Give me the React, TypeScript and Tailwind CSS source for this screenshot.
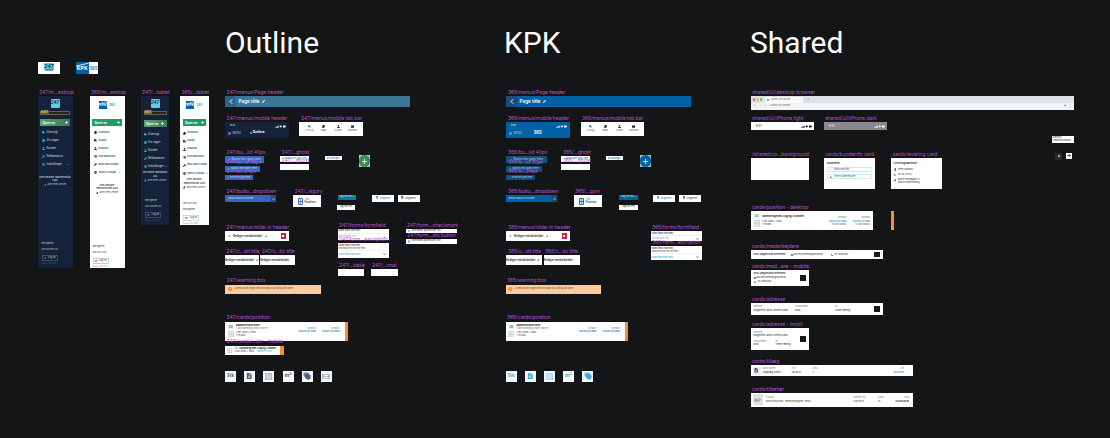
import React from 'react';
import { FaTruck, FaCopy, FaUser, FaShoppingCart, FaWrench, FaCog, FaFileAlt, FaEnvelope, FaPhoneAlt, FaHome, FaTimesCircle, FaExclamationCircle, FaPen, FaBars, FaTh } from 'react-icons/fa';

type BoxProps = { at: string; children?: React.ReactNode };

/* A frame placed on the free canvas. */
function Frame({ at, children }: BoxProps) {
  return <div className={`absolute overflow-hidden ${at}`}>{children}</div>;
}

function Label({ at, children }: BoxProps) {
  return (
    <div className={`absolute z-10 h-[6px] whitespace-nowrap text-[5px] leading-[6px] tracking-[-0.06px] text-[#b452d4] ${at}`}>{children}</div>
  );
}

function Status({ c }: { c: string }) {
  return (
    <div className={`flex items-center justify-between ${c}`}>
      <span>9:41</span>
      <svg className="h-[3px] w-[11px]" viewBox="0 0 11 3" fill="currentColor">
        <path d="M0 2h.7v.8H0zM1 1.5h.7v1.3H1zM2 1h.7v1.8H2zM3 .4h.6v2.4H3zM4.4 1.1q1.4-1.2 2.8 0L5.8 2.7zM8 .5h2.6v2H8z" />
      </svg>
    </div>
  );
}

function Logo247({ s }: { s: string }) {
  return (
    <div className={`flex flex-col items-center justify-center rounded-[1px] bg-[#62cde0] font-bold italic leading-none text-[#123a52] ${s}`}>247</div>
  );
}

function LogoKpk({ s }: { s: string }) {
  return (
    <div className={`relative flex items-end justify-center overflow-hidden bg-[#0062a8] font-bold leading-none text-white ${s}`}>
      <svg className="absolute inset-0 h-full w-full" viewBox="0 0 10 10" preserveAspectRatio="none">
        <path d="M0 3.4 10 1" stroke="#fff" strokeWidth=".7" />
      </svg>
      <span>KPK</span>
    </div>
  );
}

const icons = [FaTruck, FaCopy, FaUser, FaWrench, FaCog];
const icons365 = [FaCopy, FaTruck, FaUser, FaShoppingCart, FaWrench, FaCog];
const items247 = ['Oversigt', 'Vis sager', 'Kunder', 'Reklamation', 'Indstillinger'];
const items365 = ['OVERSIGT', 'SAGER', 'KUNDER', 'KPK WEBSHOP', 'REKLAMATIONER', 'INDSTILLINGER'];

function Sidebar({ at, kpk, tablet }: { at: string; kpk?: boolean; tablet?: boolean }) {
  const items = kpk ? items365 : items247;
  const set = kpk ? icons365 : icons;
  return (
    <Frame at={`${at} ${kpk ? 'bg-white text-[#333]' : 'bg-[#14233a] text-[#c6ced8]'}`}>
      <div className="flex h-full flex-col">
        <div className="flex h-[15px] shrink-0 items-center justify-center pt-[1px]">
          {kpk ? (
            <div className="flex items-center gap-[2px] pt-[2px]">
              <LogoKpk s="h-[8px] w-[8px] pb-[1px] text-[3.6px]" />
              <span className="text-[3px] font-bold text-[#4f9ccc]">365</span>
            </div>
          ) : (
            <Logo247 s="mb-[2px] h-[9px] w-[9px] text-[4.5px]" />
          )}
        </div>
        <div className="mx-[2.5px] h-[4px] shrink-0">
          {!kpk && (
            <div className="flex h-full items-center gap-[1px] bg-[#6b5f42] px-[1px] text-[3.4px] font-bold leading-none text-[#e6c877]">
              <span>KEY</span>
              <span className="h-[2px] flex-1 bg-[#26251f]" />
            </div>
          )}
        </div>
        <div className={`mx-[2.5px] flex h-[7px] shrink-0 items-center justify-between px-[2.5px] text-[3px] font-bold leading-[4px] text-white ${tablet && !kpk ? 'mt-[5px]' : 'mt-[4px]'} ${kpk ? 'bg-[#219a63]' : 'bg-gradient-to-r from-[#5aa373] to-[#3b7b55]'}`}>
          <span>Opret ny</span>
          <svg className="h-[3px] w-[3px]" viewBox="0 0 3 3" stroke="#fff" strokeWidth=".7"><path d="M1.5 0v3M0 1.5h3" /></svg>
        </div>
        <div className={tablet ? 'mt-[3px]' : 'mt-[2.3px]'}>
          {items.map((t, i) => {
            const Icon = set[i];
            return (
              <div key={t} className={`flex h-[8.05px] items-center gap-[1.5px] whitespace-nowrap ${tablet ? 'pl-[2.5px]' : 'pl-[4.5px]'}`}>
                <Icon className={`h-[3px] w-[3px] shrink-0 ${kpk ? 'text-[#222]' : 'text-[#31b3cc]'}`} />
                <span className={kpk ? 'text-[2.3px] font-bold text-[#315b7c]' : 'text-[2.8px] font-medium'}>{t}</span>
                {i === items.length - 1 && <span className="ml-auto pr-[4px] text-[3px]">⌄</span>}
              </div>
            );
          })}
        </div>
        <div className={`text-center font-semibold leading-[3.5px] ${tablet ? 'mt-[1px]' : 'mt-[7px]'} ${tablet && !kpk ? 'text-[2.1px]' : 'text-[2.7px]'}`}>
          <div className="whitespace-nowrap">{kpk ? 'Den bedste' : 'Den bedste Tømrerbutik'}</div>
          <div className="whitespace-nowrap">{kpk ? 'Tømrerbutik ApS' : 'ApS'}</div>
          <div className="mt-[0.5px] flex items-center justify-center gap-[1px] whitespace-nowrap text-[2.2px] font-normal">
            <FaUser className={`h-[2.5px] w-[2.5px] ${kpk ? 'text-[#222]' : 'text-[#31b3cc]'}`} />
            Jane Peter Jensen
          </div>
        </div>
        <div className={`mt-auto flex flex-col gap-[1.5px] text-[2.3px] leading-[3.8px] ${kpk ? 'pb-[1px] pl-[3px]' : 'pb-[4px] pl-[4px]'}`}>
          <span>{kpk && tablet ? 'Om KPK 365' : 'Betingelser'}</span>
          <span className="whitespace-nowrap">{kpk ? (tablet ? 'Betingelser' : 'Om KPK 365') : 'Om Outline 247'}</span>
          <div className={`mt-[2px] flex h-[5.5px] w-[16px] items-center justify-center gap-[2px] border ${kpk ? (tablet ? 'border-[#c4ddf0]' : 'border-[#ccc]') : 'border-[#3f4c60]'}`}>
            <FaTimesCircle className="h-[2.5px] w-[2.5px] text-[#e33c4e]" />
            <span>Log ud</span>
          </div>
          <span className={`text-[1.8px] leading-[2px] ${kpk ? 'text-[#777]' : 'text-[#2d6e80]'}`}>Version 1.0.1 (123)</span>
        </div>
      </div>
    </Frame>
  );
}

function PageHeader({ at, back }: { at: string; back: string }) {
  return (
    <Frame at={at}>
      <div className="flex h-full items-center text-white">
        <div className={`flex h-full w-[11px] items-center justify-center ${back}`}>
          <svg className="h-[5px] w-[4px]" viewBox="0 0 4 5" fill="none" stroke="#fff" strokeWidth="1"><path d="M3.2.3 1 2.5l2.2 2.2" /></svg>
        </div>
        <span className="pl-[2.5px] text-[4.7px] font-semibold">Page title</span>
        <FaPen className="ml-[2.5px] h-[3px] w-[3px]" />
      </div>
    </Frame>
  );
}

function MobileHeader({ at, kpk }: { at: string; kpk?: boolean }) {
  return (
    <Frame at={at}>
      <Status c="h-[8px] pl-[5px] pr-[3px] text-[2.6px] text-white" />
      <div className="flex h-[6px] items-center pl-[3px] text-[2.8px] text-[#b9c7d6]">
        <FaBars className="mr-[1.5px] h-[3px] w-[3px]" />
        <span className="w-[17px]">MENU</span>
        {kpk ? (
          <span className="pl-[3px] text-[4.2px] font-bold text-white">365</span>
        ) : (
          <>
            <span className="mr-[0.5px] h-[2.5px] w-[2.5px] rounded-full bg-[#41bdcf]" />
            <span className="text-[3.4px] font-bold text-white">Outline</span>
          </>
        )}
      </div>
    </Frame>
  );
}

function TabBar({ at }: { at: string }) {
  const tabs = [[FaTruck, 'Oversigt'], [FaCopy, 'Sager'], [FaUser, 'Kunder'], [FaEnvelope, 'Beskeder']] as const;
  return (
    <Frame at={`bg-white ${at}`}>
      <div className="flex h-full items-center justify-around px-[3px]">
        {tabs.map(([Icon, t], i) => (
          <div key={t} className={`flex w-[14px] flex-col items-center gap-[1.2px] text-[2.1px] leading-[2.5px] ${i ? 'text-[#555]' : 'text-[#4a80d0]'}`}>
            <Icon className={`h-[3px] w-[3px] ${i ? 'text-[#222]' : ''}`} />
            <span>{t}</span>
          </div>
        ))}
      </div>
    </Frame>
  );
}

function Button({ at, children }: BoxProps) {
  return (
    <Frame at={at}>
      <div className="flex h-full items-center justify-center gap-[1.5px] whitespace-nowrap">
        <span>+</span>
        <span>{children}</span>
      </div>
    </Frame>
  );
}

function RoundAdd({ at, c }: { at: string; c: string }) {
  return (
    <Frame at={at}>
      <div className={`flex h-full w-full items-center justify-center rounded-full ${c}`}>
        <svg className="h-[5px] w-[5px]" viewBox="0 0 5 5" stroke="#fff" strokeWidth=".8"><path d="M2.5 0v5M0 2.5h5" /></svg>
      </div>
    </Frame>
  );
}

function Dropdown({ at, side }: { at: string; side: string }) {
  return (
    <Frame at={at}>
      <div className="flex h-full items-center justify-between text-[2.7px] text-[#cfe0f5]">
        <span className="pl-[2.5px]">Send tilbud til kunde</span>
        <span className={`flex h-full w-[6px] items-center justify-center ${side}`}>
          <svg className="h-[2px] w-[3px]" viewBox="0 0 3 2" fill="none" stroke="#fff" strokeWidth=".7"><path d="M.3 1.6 1.5.4l1.2 1.2" /></svg>
        </span>
      </div>
    </Frame>
  );
}

function Category({ at, c }: { at: string; c: string }) {
  return (
    <Frame at={`bg-white ${at}`}>
      <div className="flex h-full items-center gap-[2px] pl-[5px]">
        <svg className={`h-[7px] w-[5px] ${c}`} viewBox="0 0 5 7" fill="none" stroke="currentColor"><path d="M.5.5h4v6h-4zM.5 3.5h4M1.5 2h2M1.5 5h2" /></svg>
        <div className="text-[2px] leading-[3.5px] text-[#777]">
          <div>Tilføj</div>
          <div className="text-[2.8px] font-semibold text-[#333]">Position</div>
        </div>
      </div>
    </Frame>
  );
}

function Segment({ at, c }: { at: string; c: string }) {
  return (
    <Frame at={`bg-white ${at}`}>
      <div className={`flex items-center justify-center gap-[1.5px] pt-[0.5px] text-[2.6px] leading-[4px] ${c}`}>
        <FaFileAlt className="h-[2.5px] w-[2.5px]" />
        <span>Segment</span>
      </div>
    </Frame>
  );
}

function Chip({ at, children }: BoxProps) {
  return (
    <Frame at={at}>
      <div className="flex h-full items-center justify-center whitespace-nowrap text-[2.2px] leading-[4px]">{children}</div>
    </Frame>
  );
}

function SlideIn({ at }: { at: string }) {
  return (
    <Frame at={`bg-white ${at}`}>
      <div className="flex h-full items-center pl-[3px] pr-[3px] text-[#222]">
        <span className="w-[5px] text-[4px]">×</span>
        <span className="whitespace-nowrap text-[2.9px] font-semibold">Rediger medarbejder</span>
        <FaPen className="ml-[2.5px] h-[2.5px] w-[2.5px] text-[#1686c4]" />
        <div className="ml-auto flex h-[5.5px] w-[5.5px] items-center justify-center bg-[#cf1f43]">
          <span className="h-[2px] w-[2px] bg-white" />
        </div>
      </div>
    </Frame>
  );
}

function EditTitle({ at, pen }: { at: string; pen?: boolean }) {
  return (
    <Frame at={`bg-white ${at}`}>
      <div className="flex h-full items-center whitespace-nowrap text-[2.9px] font-semibold text-[#222]">
        Rediger medarbejder
        {pen && <FaPen className="ml-[2px] h-[2.5px] w-[2.5px] shrink-0 text-[#1686c4]" />}
      </div>
    </Frame>
  );
}

function FormField({ at, desc, c }: { at: string; desc?: boolean; c?: string }) {
  return (
    <Frame at={`bg-white ${at}`}>
      <div className="flex h-full flex-col px-[1px] pt-[0.5px] text-[2.3px] leading-[3px] text-[#333]">
        <span className="font-semibold">Form field Title text</span>
        {desc && <span className="text-[2px]">Description text for the field</span>}
        <div className={`mt-[0.5px] flex flex-1 items-center justify-between border-t border-[#f0f0f0] pr-[2px] ${c ?? 'text-[#999]'}`}>
          <span>{desc ? 'Form field input text' : 'Placeholder text'}</span>
          <svg className="h-[2px] w-[3px]" viewBox="0 0 3 2" fill="none" stroke="#222" strokeWidth=".6"><path d="M.3.4 1.5 1.6 2.7.4" /></svg>
        </div>
      </div>
    </Frame>
  );
}

function Check({ at }: { at: string }) {
  return (
    <Frame at={`bg-white ${at}`}>
      <div className="flex h-full items-center gap-[1.5px] pl-[1.5px] text-[2.2px] text-[#222]">
        <span className="h-[2.5px] w-[2.5px] bg-[#8fcde6]" />
        <span className="whitespace-nowrap leading-[4px]">Checkmark placeholder text</span>
      </div>
    </Frame>
  );
}

function Warning({ at }: { at: string }) {
  return (
    <Frame at={`bg-[#fdcb9c] ${at}`}>
      <div className="flex h-full items-center gap-[2.5px] pl-[2.5px] text-[2.3px] text-[#5d4a38]">
        <FaExclamationCircle className="h-[4.5px] w-[4.5px] text-[#f7922d]" />
        <span>Lorem ipsum noget med hvordan skal stå og så videre</span>
      </div>
    </Frame>
  );
}

function Price({ c, foot }: { c: string; foot?: boolean }) {
  return (
    <div className="flex flex-col items-end whitespace-nowrap text-[2.2px] leading-[3.6px] text-[#666]">
      <span>Stykpris</span>
      <span className={`text-[2.4px] font-bold ${c}`}>160.817,91 DKK</span>
      {foot && <span className="text-[2px] text-[#333]">112.482,50 DKK</span>}
    </div>
  );
}

function Position({ at, c, title, shared }: { at: string; c: string; title: string; shared?: boolean }) {
  return (
    <Frame at={`bg-white ${at}`}>
      <div className="flex h-full text-[#222]">
        <div className="flex w-[11px] flex-col items-center gap-[1.5px] pt-[3.5px]">
          <span className={`flex h-[4px] w-[4.5px] items-center justify-center bg-[#e0f1f8] text-[2.8px] font-bold leading-none ${c}`}>20</span>
          <svg className="h-[6.5px] w-[6px]" viewBox="0 0 6 7" fill="#f4f4f4" stroke="#999" strokeWidth=".4"><path d="M.3.3h5.4v6.4H.3zM3 .3v6.4M.3 3.5h5.4" /></svg>
        </div>
        <div className={`flex-1 whitespace-nowrap text-[2.2px] leading-[3.4px] ${shared ? 'pt-[3.5px]' : 'pt-[2.5px]'}`}>
          <div className="text-[2.5px] font-bold">{title}</div>
          {!shared && <div className="text-[1.9px] text-[#666]">1-fløjet dannebrog vindue, topstyret</div>}
          <div className={shared ? 'mt-[2px]' : ''}>2 stk (1050 x 1300)</div>
          <div>1.115,000</div>
        </div>
        <div className={`flex gap-[6px] pt-[5px] ${shared ? 'pr-[3px]' : 'pr-[5px]'}`}>
          <Price c={c} foot={shared} />
          <Price c={c} foot={shared} />
        </div>
        {!shared && <div className="w-[3px] shrink-0 bg-[#f7902b]" />}
      </div>
    </Frame>
  );
}

const tools = [
  <span className="text-[4.3px] font-bold">Stk</span>,
  <FaFileAlt className="h-[6.5px] w-[6.5px]" />,
  <svg className="h-[7px] w-[7px]" viewBox="0 0 7 7" stroke="currentColor" strokeWidth=".5"><path d="M.4.4h6.2v6.2H.4z" fill="currentColor" fillOpacity=".25" strokeDasharray=".8 .4" /></svg>,
  <span className="text-[5.2px] font-bold">m²</span>,
  <svg className="h-[8px] w-[8px]" viewBox="0 0 8 8" fill="currentColor"><path d="m.5.5 4-.1L6 2v3L2.5 5.5.5 4z" opacity=".8" /><path d="m2 2 3.5-.4 2 1.8v3L5.5 8 2 6z" /></svg>,
  <svg className="h-[7px] w-[8px]" viewBox="0 0 8 7" fill="none" stroke="currentColor" strokeWidth=".6"><path d="M.5.4v6.2M7.5.4v6.2M.5 3.5h7M1.5 1.5h5v4h-5z" opacity=".6" /></svg>,
];

function Tools({ at, c, count }: { at: string; c: string; count: number }) {
  return (
    <div className={`absolute flex gap-[8.2px] ${at}`}>
      {tools.slice(0, count).map((t, i) => (
        <div key={i} className={`flex h-[11px] w-[11px] shrink-0 items-center justify-center bg-[#f5f8fa] leading-none ${c}`}>{t}</div>
      ))}
    </div>
  );
}

function Pair({ w, top, bottom, c }: { w: string; top: string; bottom: string; c?: string }) {
  return (
    <div className={`whitespace-nowrap text-[2.2px] leading-[3.6px] text-[#777] ${w}`}>
      <div>{top}</div>
      <div className={c ?? 'text-[#222]'}>{bottom}</div>
    </div>
  );
}

const Square = () => <div className="mr-[3px] ml-auto h-[5.5px] w-[5.5px] shrink-0 bg-[#17191c]" />;

function OutlineSection() {
  return (
    <>
      <Label at="left-[226.5px] top-[88.7px]">247/menus/Page header</Label>
      <PageHeader at="left-[225px] top-[96px] h-[11px] w-[185px] bg-[#3b7697]" back="bg-[#2e6486]" />
      <Label at="left-[226.5px] top-[115px]">247/menus/mobile header</Label>
      <MobileHeader at="left-[225px] top-[122px] h-[15.5px] w-[64px] bg-[#14233a]" />
      <Label at="left-[301px] top-[115px]">247/menus/mobile tab bar</Label>
      <TabBar at="left-[299px] top-[122px] h-[13.5px] w-[64px]" />
      <Label at="left-[226.5px] top-[148.5px]">247/bu...lid 40px</Label>
      <Button at="left-[225px] top-[155.5px] h-[7.5px] w-[39px] bg-[#3568bd] text-[2.9px] text-[#c9daf5]">Button text goes here</Button>
      <Label at="left-[226.5px] top-[158.5px]">247/b...id 32px</Label>
      <Button at="left-[225px] top-[166px] h-[6px] w-[35px] bg-[#3568bd] text-[2.6px] text-[#c9daf5]">Button text goes here</Button>
      <Label at="left-[226.5px] top-[168px]">247/b...24px</Label>
      <Button at="left-[225px] top-[175px] h-[4.5px] w-[27.5px] bg-[#3568bd] text-[2px] text-[#c9daf5]">Button text goes here</Button>
      <Label at="left-[281.5px] top-[148.5px]">247/...ghost</Label>
      <Button at="left-[280px] top-[156px] h-[6px] w-[29px] bg-white text-[2.2px] text-[#3568bd]">Button text goes here</Button>
      <Label at="left-[281.5px] top-[156.7px]">247/...ghost</Label>
      <Frame at="left-[280px] top-[164px] h-[6px] w-[29px] bg-white" />
      <Frame at="left-[325px] top-[155.5px] h-[4.5px] w-[16.5px] bg-white text-[#3568bd]">
        <div className="flex h-full items-center justify-center gap-[1px] text-[2.7px]"><FaPen className="h-[2px] w-[2px]" />Rediger</div>
      </Frame>
      <RoundAdd at="left-[358.5px] top-[155px] h-[12px] w-[11.5px] bg-[#b9cabf]" c="bg-[#3c8a57]" />
      <Label at="left-[226.5px] top-[187.7px]">247/butto...dropdown</Label>
      <Dropdown at="left-[225px] top-[195px] h-[7px] w-[51px] bg-[#3568bd]" side="bg-[#284d8d]" />
      <Label at="left-[294.5px] top-[187.7px]">247/...egory</Label>
      <Category at="left-[292.5px] top-[195px] h-[12px] w-[28.5px]" c="text-[#4775c4]" />
      <Chip at="left-[338px] top-[195px] h-[4.5px] w-[18px] bg-[#0e7893] text-[#d6f3f9]">Tag title text ×</Chip>
      <Chip at="left-[337px] top-[205px] h-[4.5px] w-[18px] bg-white text-[#222]">Tag title text</Chip>
      <Segment at="left-[372px] top-[195px] h-[7px] w-[22px]" c="text-[#3568bd]" />
      <Segment at="left-[397.5px] top-[195px] h-[7px] w-[22px]" c="text-[#333]" />
      <Label at="left-[226.5px] top-[224px]">247/menus/slide-in header</Label>
      <SlideIn at="left-[225px] top-[231px] h-[10px] w-[64px]" />
      <Label at="left-[226.5px] top-[248px]">247/c...dit title</Label>
      <EditTitle at="left-[225px] top-[255px] h-[10px] w-[34px]" pen />
      <Label at="left-[262px] top-[248px]">247/c...tic title</Label>
      <EditTitle at="left-[260px] top-[255px] h-[10px] w-[35px]" />
      <Label at="left-[339px] top-[221.7px]">247/forms/formfield</Label>
      <FormField at="left-[337.5px] top-[228.5px] h-[11px] w-[51px]" />
      <Label at="left-[339px] top-[236px]">247/form...escription</Label>
      <FormField at="left-[337.5px] top-[243px] h-[14.5px] w-[51px]" desc c="text-[#1a91b0]" />
      <Label at="left-[407px] top-[221.7px]">247/form...checkmark</Label>
      <Check at="left-[406px] top-[228.5px] h-[4.5px] w-[51px]" />
      <Label at="left-[407px] top-[232.3px]">247/form...dio button</Label>
      <Check at="left-[406px] top-[239px] h-[4.5px] w-[51px]" />
      <Label at="left-[339px] top-[261.7px]">247/...table</Label>
      <Frame at="left-[337.5px] top-[269px] h-[7px] w-[26.5px] bg-white" />
      <Label at="left-[372px] top-[261.7px]">247/...rmal</Label>
      <Frame at="left-[371px] top-[269px] h-[7px] w-[26.5px] bg-white" />
      <Label at="left-[226.5px] top-[277px]">247/warning box</Label>
      <Warning at="left-[225px] top-[284.5px] h-[9px] w-[96px]" />
      <Label at="left-[226.5px] top-[314px]">247/cards/position</Label>
      <Position at="left-[225px] top-[321.5px] h-[19px] w-[122.5px]" c="text-[#1590b5]" title="Køkkenvindue nord" />
      <Label at="left-[226.5px] top-[338px]">247/cards/...ion - mobile</Label>
      <Frame at="left-[225px] top-[345.5px] h-[9.5px] w-[58.5px] bg-white">
        <div className="flex h-full items-center text-[2.2px] leading-[3.4px] text-[#222]">
          <FaTh className="mx-[2px] h-[5.5px] w-[5.5px] text-[#ccc]" />
          <div className="flex-1 whitespace-nowrap">
            <div className="font-bold"><span className="mr-[2px] text-[#1590b5]">20</span>Dannebrog med 3 lag og 3 rammer</div>
            <div>2 stk (1050 x 1300) <span className="ml-[2px] text-[#1590b5]">160.817,91 DKK</span></div>
          </div>
          <div className="h-full w-[3.5px] bg-[#f7902b]" />
        </div>
      </Frame>
      <Tools at="left-[225px] top-[370.5px]" c="text-[#526077]" count={6} />
    </>
  );
}

function KpkSection() {
  return (
    <>
      <Label at="left-[508px] top-[88.7px]">365/menus/Page header</Label>
      <PageHeader at="left-[506px] top-[96px] h-[11px] w-[185px] bg-[#0061a4]" back="bg-[#164d7b]" />
      <Label at="left-[508px] top-[115px]">365/menus/mobile header</Label>
      <MobileHeader at="left-[506px] top-[122px] h-[15.5px] w-[63.5px] bg-[#0061a4]" kpk />
      <Label at="left-[582px] top-[115px]">365/menus/mobile tab bar</Label>
      <TabBar at="left-[580.5px] top-[122px] h-[13.5px] w-[63.5px]" />
      <Label at="left-[508px] top-[148.5px]">365/bu...lid 40px</Label>
      <Button at="left-[506px] top-[155.5px] h-[7.5px] w-[41px] bg-[#134f7c] text-[2.9px] text-[#bcd9ee]">Button text goes here</Button>
      <Label at="left-[508px] top-[158.5px]">365/b...id 32px</Label>
      <Button at="left-[506px] top-[166px] h-[6px] w-[36px] bg-[#134f7c] text-[2.6px] text-[#bcd9ee]">Button text goes here</Button>
      <Label at="left-[508px] top-[168px]">365/b...24px</Label>
      <Button at="left-[506px] top-[175px] h-[4.5px] w-[29px] bg-[#134f7c] text-[2px] text-[#bcd9ee]">Button text goes here</Button>
      <Label at="left-[563px] top-[148.5px]">365/...ghost</Label>
      <Button at="left-[561px] top-[156px] h-[6px] w-[29px] bg-white text-[2.2px] text-[#0061a4]">Button text goes here</Button>
      <Label at="left-[563px] top-[156.7px]">365/...ghost</Label>
      <Frame at="left-[561px] top-[164px] h-[6px] w-[29px] bg-white" />
      <Frame at="left-[605.5px] top-[155.5px] h-[4.5px] w-[17.5px] bg-white text-[#0061a4]">
        <div className="flex h-full items-center justify-center gap-[1px] text-[2.7px]"><FaPen className="h-[2px] w-[2px]" />Rediger</div>
      </Frame>
      <RoundAdd at="left-[639.5px] top-[155px] h-[12px] w-[11.5px] bg-[#a9bccb]" c="bg-[#0061a4]" />
      <Label at="left-[508px] top-[187.7px]">365/butto...dropdown</Label>
      <Dropdown at="left-[506px] top-[195px] h-[7px] w-[51px] bg-[#0061a4]" side="bg-[#154d7b]" />
      <Label at="left-[575px] top-[187.7px]">365/...gory</Label>
      <Category at="left-[573.5px] top-[195px] h-[12px] w-[28.5px]" c="text-[#1e75b3]" />
      <Chip at="left-[619px] top-[195px] h-[4.5px] w-[19px] bg-[#0061a4] text-[#d9edfb]">Tag title text ×</Chip>
      <Chip at="left-[619px] top-[205px] h-[4.5px] w-[19px] bg-white text-[#222]">Tag title text</Chip>
      <Segment at="left-[653px] top-[195px] h-[7px] w-[22px]" c="text-[#1e75b3]" />
      <Segment at="left-[679px] top-[195px] h-[7px] w-[22px]" c="text-[#333]" />
      <Label at="left-[508px] top-[224px]">365/menus/slide-in header</Label>
      <SlideIn at="left-[506px] top-[231px] h-[10px] w-[64px]" />
      <Label at="left-[508px] top-[248px]">365/c...dit title</Label>
      <EditTitle at="left-[506px] top-[255px] h-[10px] w-[36px]" pen />
      <Label at="left-[545px] top-[248px]">365/c...tic title</Label>
      <EditTitle at="left-[543.5px] top-[255px] h-[10px] w-[36.5px]" />
      <Label at="left-[652px] top-[224px]">365/forms/formfield</Label>
      <FormField at="left-[650.5px] top-[231px] h-[10px] w-[51.5px]" />
      <Label at="left-[652px] top-[238.5px]">365/form...escription</Label>
      <FormField at="left-[650.5px] top-[246px] h-[14px] w-[51.5px]" desc c="text-[#267cc0]" />
      <Label at="left-[507px] top-[277px]">365/warning box</Label>
      <Warning at="left-[505.5px] top-[284.5px] h-[9px] w-[95.5px]" />
      <Label at="left-[507px] top-[314px]">365/cards/position</Label>
      <Position at="left-[505.5px] top-[321.5px] h-[19px] w-[122.5px]" c="text-[#2081c3]" title="Køkkenvindue nord" />
      <Tools at="left-[505.5px] top-[370.5px]" c="text-[#38aee0]" count={5} />
    </>
  );
}

function SharedSection() {
  return (
    <>
      <Label at="left-[752px] top-[88.7px]">shared/UI/desktop browser</Label>
      <Frame at="left-[751px] top-[96px] h-[13.5px] w-[322.5px] bg-[#f1f3f5] text-[2.4px] text-[#666]">
        <div className="flex h-[7px] items-center bg-[#dee1e5] pl-[2px]">
          <span className="mr-[1px] h-[2.3px] w-[2.3px] rounded-full bg-[#ed6058]" />
          <span className="mr-[1px] h-[2.3px] w-[2.3px] rounded-full bg-[#f3bd45]" />
          <span className="h-[2.3px] w-[2.3px] rounded-full bg-[#5fc452]" />
          <div className="mt-[1px] ml-[3px] flex h-[6px] w-[38px] items-center rounded-t-[1px] bg-[#f8f9fa] px-[2px]">
            <span className="mr-[1.5px] h-[2.5px] w-[2.5px] rounded-full bg-[#3f83ee]" />
            <span>Outlet-247/home</span>
            <span className="ml-auto">×</span>
          </div>
          <span className="ml-[4px] text-[3.5px]">+</span>
        </div>
        <div className="flex h-[6.5px] items-center gap-[3px] px-[2.5px]">
          <span>←</span><span className="text-[#bbb]">→</span><span>⟳</span>
          <span>▪ outlet-247/home</span>
          <span className="ml-auto">▦</span><span>⋮</span>
        </div>
      </Frame>
      <Label at="left-[752px] top-[115px]">shared/UI/iPhone light</Label>
      <Frame at="left-[751px] top-[122px] h-[8px] w-[63px] bg-white"><Status c="h-full pl-[5px] pr-[2px] text-[2.8px] text-[#111]" /></Frame>
      <Label at="left-[825px] top-[115px]">shared/UI/iPhone dark</Label>
      <Frame at="left-[824px] top-[122px] h-[8px] w-[63px] bg-[#89888e]"><Status c="h-full pl-[5px] pr-[2px] text-[2.8px] text-white" /></Frame>
      <Label at="left-[752px] top-[150.7px]">/shared/co...background</Label>
      <Frame at="left-[751px] top-[158px] h-[22px] w-[57.5px] bg-white" />
      <Label at="left-[825px] top-[150.7px]">cards/kundeinfo card</Label>
      <Frame at="left-[824px] top-[158px] h-[30.5px] w-[51px] bg-white">
        <div className="flex flex-col gap-[1.5px] px-[3px] pt-[3.5px] text-[2.1px] text-[#333]">
          <span className="h-[4.2px] text-[2.5px] font-bold leading-[3.5px]">Kundeinfo</span>
          <div className="flex h-[5.3px] items-center gap-[2px] border border-[#cdebf4] pl-[2px]"><span>+</span>Tilføj kunde info</div>
          <div className="flex h-[5.3px] items-center gap-[2px] border border-[#cdebf4] pl-[2px]"><FaPhoneAlt className="h-[2px] w-[2px]" />Tilknyt kunde fra liste</div>
        </div>
      </Frame>
      <Label at="left-[892.5px] top-[150.7px]">cards/levering card</Label>
      <Frame at="left-[891px] top-[158px] h-[30.5px] w-[51px] bg-white">
        <div className="flex flex-col whitespace-nowrap pl-[2.5px] pt-[3.5px] text-[2.3px] text-[#333]">
          <span className="mb-[1.5px] text-[2.7px] font-bold leading-[3.5px]">Leveringsadresse</span>
          <div className="flex h-[5.7px] items-center gap-[2px]"><FaUser className="h-[2.4px] w-[2.4px]" />Peter Madsen</div>
          <div className="flex h-[5.7px] items-center gap-[2px]"><FaPhoneAlt className="h-[2.4px] w-[2.4px]" />20 30 40 50</div>
          <div className="flex items-start gap-[2px] pt-[1px] leading-[2.8px]"><FaHome className="h-[2.4px] w-[2.4px]" /><div>Østre Havnegade 12<br />9000 Frederiksberg</div></div>
        </div>
      </Frame>
      <Label at="left-[752px] top-[203.7px]">cards/position - desktop</Label>
      <Position at="left-[751px] top-[211px] h-[18.5px] w-[122px]" c="text-[#1a9dc0]" title="Dannebrog med 3 lag og 3 rammer" shared />
      <Frame at="left-[891px] top-[211px] h-[18.5px] w-[3px] bg-[#f7902b]" />
      <Label at="left-[752px] top-[242.5px]">cards/medarbejdere</Label>
      <Frame at="left-[751px] top-[250px] h-[9px] w-[131.5px] bg-white">
        <div className="flex h-full items-center whitespace-nowrap pl-[2.5px] text-[2px] text-[#222]">
          <span className="w-[37px] text-[2.5px] font-semibold">Poul Jørgen Erik Pettersen</span>
          <FaEnvelope className="mr-[1px] h-[2px] w-[2px]" /><span className="w-[37px]">poul.erik.pettersen@sjolund.dk</span>
          <FaPhoneAlt className="mr-[1px] h-[2px] w-[2px]" /><span>+45 20304050</span>
          <Square />
        </div>
      </Frame>
      <Label at="left-[752px] top-[262.5px]">cards/med...ere - mobile</Label>
      <Frame at="left-[751px] top-[270px] h-[16px] w-[57.5px] bg-white">
        <div className="flex h-full items-center whitespace-nowrap pl-[2.5px] text-[2px] leading-[3.7px] text-[#222]">
          <div>
            <div className="text-[2.5px] font-semibold">Poul Jørgen Erik Pettersen</div>
            <div className="flex items-center gap-[1px]"><FaEnvelope className="h-[2px] w-[2px]" />poul.erik.pettersen@sjolund.dk</div>
            <div className="flex items-center gap-[1px]"><FaPhoneAlt className="h-[2px] w-[2px]" />+45 20304050</div>
          </div>
          <Square />
        </div>
      </Frame>
      <Label at="left-[752px] top-[295.5px]">cards/adresse</Label>
      <Frame at="left-[751px] top-[303px] h-[12px] w-[131.5px] bg-white">
        <div className="flex h-full items-center pl-[2.5px]">
          <Pair w="w-[41.5px]" top="Adresse" bottom="Borgmester Jakob Jensens Gade" />
          <Pair w="w-[40px]" top="Postnummer" bottom="8000" />
          <Pair w="w-[20px]" top="By" bottom="Vester Hæsing" />
          <Square />
        </div>
      </Frame>
      <Label at="left-[752px] top-[320.7px]">cards/adresse - mobil</Label>
      <Frame at="left-[751px] top-[328px] h-[21.5px] w-[57.5px] bg-white">
        <div className="flex h-full items-center pl-[2.5px]">
          <div className="flex flex-col gap-[2px]">
            <Pair w="" top="Adresse" bottom="Borgmester Jakob Jensens Gade" />
            <div className="flex">
              <Pair w="w-[22px]" top="Postnummer" bottom="8000" />
              <Pair w="" top="By" bottom="Vester Hæsing" />
            </div>
          </div>
          <Square />
        </div>
      </Frame>
      <Label at="left-[752px] top-[358px]">cards/tillæg</Label>
      <Frame at="left-[751px] top-[365px] h-[11px] w-[161.5px] bg-white">
        <div className="flex h-full items-center pl-[1.5px]">
          <div className="mr-[2px] flex h-[8px] w-[8px] items-center justify-center bg-[#e9eef4]"><FaFileAlt className="h-[4.5px] w-[4.5px] text-[#44536a]" /></div>
          <Pair w="w-[29px]" top="Navn/varenr" bottom="Fragttilæg Sydfyn" />
          <Pair w="w-[21px]" top="Pris" bottom="100,00 kr" />
          <Pair w="w-[10px]" top="Antal" bottom="2" />
          <Pair w="ml-auto mr-[8.5px] text-right" top="I alt" bottom="200,00 kr" c="font-bold text-[#29a3c4]" />
        </div>
      </Frame>
      <Label at="left-[752px] top-[385.7px]">cards/tilbehør</Label>
      <Frame at="left-[751px] top-[392.5px] h-[14px] w-[161.5px] bg-white">
        <div className="flex h-full items-center pl-[1.5px]">
          <div className="mr-[3px] flex h-[11px] w-[10.5px] items-center justify-center bg-[#dce1e3]">
            <svg className="h-[4px] w-[7px]" viewBox="0 0 7 4" fill="#e7e9e9" stroke="#69767c" strokeWidth=".6"><path d="M.5 3 2 .7 3 3 4.5.7 6.5 1 5.4 3z" /></svg>
          </div>
          <Pair w="w-[87px]" top="Produkt" bottom="Bosch 01028354, Terrasse Borgholz, Ferdil" />
          <Pair w="w-[25px]" top="Listepris stk" bottom="1.100,50 kr" />
          <Pair w="w-[10px]" top="Antal" bottom="10" />
          <Pair w="ml-auto mr-[3.5px] text-right" top="Total" bottom="10.000,00 kr" c="font-bold text-[#222]" />
        </div>
      </Frame>
      <Frame at="left-[1052px] top-[136px] h-[7px] w-[21.5px] bg-white">
        <div className="whitespace-nowrap pl-[0.5px] text-[2px] leading-[3.4px] text-[#222]"><div>Overskrift</div><div>Undertekst position</div></div>
      </Frame>
      <Frame at="left-[1055px] top-[152.5px] h-[7px] w-[7px] bg-[#2a2b2c]">
        <div className="flex h-full items-center justify-center"><span className="h-[2.5px] w-[2px] bg-[#a9a9a9]" /></div>
      </Frame>
      <Frame at="left-[1066px] top-[152.5px] h-[6px] w-[6px] bg-white">
        <div className="flex h-full items-center justify-center text-[#222]">
          <svg className="h-[3px] w-[4px]" viewBox="0 0 4 3" fill="none" stroke="currentColor" strokeWidth=".7"><path d="M0 1.5h3.4M2 .2l1.4 1.3L2 2.8" /></svg>
        </div>
      </Frame>
    </>
  );
}

export default function App() {
  return (
    <main className="relative h-[438px] w-[1110px] overflow-hidden bg-[#141517] font-['Inter',sans-serif]">
      <h1 className="absolute left-[225px] top-[25px] font-['Roboto',sans-serif] text-[30px] leading-[36px] text-white">Outline</h1>
      <h1 className="absolute left-[504px] top-[25px] font-['Roboto',sans-serif] text-[30px] leading-[36px] text-white">KPK</h1>
      <h1 className="absolute left-[750px] top-[25px] font-['Roboto',sans-serif] text-[30px] leading-[36px] text-white">Shared</h1>

      <Frame at="left-[38px] top-[61.5px] h-[12px] w-[22px] bg-white">
        <div className="flex h-full flex-col items-center justify-center gap-[0.5px]">
          <Logo247 s="h-[7px] w-[9.5px] text-[5px]" />
          <span className="text-[2.3px] font-bold leading-[2.5px] text-[#234]">Outline</span>
        </div>
      </Frame>
      <Frame at="left-[76px] top-[61.5px] h-[12px] w-[22px] bg-white">
        <div className="flex h-full items-center">
          <LogoKpk s="h-full w-[12.5px] shrink-0 pb-[2px] text-[5.2px]" />
          <span className="flex-1 pt-[3px] text-center text-[4.4px] font-bold text-[#2f86bd]">365</span>
        </div>
      </Frame>

      <Label at="left-[39px] top-[88.7px]">247/m...esktop</Label>
      <Sidebar at="left-[37.5px] top-[96px] h-[172px] w-[35px]" />
      <Label at="left-[91px] top-[88.7px]">365/m...esktop</Label>
      <Sidebar at="left-[89.5px] top-[96px] h-[172px] w-[35px]" kpk />
      <Label at="left-[142px] top-[88.7px]">247/...tablet</Label>
      <Sidebar at="left-[141px] top-[96px] h-[129px] w-[28px]" tablet />
      <Label at="left-[181.5px] top-[88.7px]">365/...tablet</Label>
      <Sidebar at="left-[180px] top-[96px] h-[129px] w-[28.5px]" kpk tablet />

      <OutlineSection />
      <KpkSection />
      <SharedSection />
    </main>
  );
}
